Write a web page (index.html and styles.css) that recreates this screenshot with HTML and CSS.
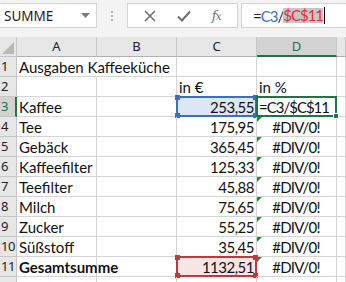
FILE: index.html
```html
<!DOCTYPE html>
<html>
<head>
<meta charset="utf-8">
<link rel="stylesheet" href="styles.css">
</head>
<body>
<div class="app">
  <div class="fbar">
    <div class="namebox">
      <span class="nm">SUMME</span>
      <svg class="dd" width="9" height="5" viewBox="0 0 9 5"><path d="M0 0H9L4.5 5Z" fill="#7a7a7a"/></svg>
    </div>
    <div class="grip"><i></i><i></i><i></i></div>
    <div class="btns">
      <svg class="ico" width="12" height="12" viewBox="0 0 12 12"><path d="M1 1L11 11M11 1L1 11" stroke="#6f6f6f" stroke-width="1.6" fill="none"/></svg>
      <svg class="ico" width="14" height="12" viewBox="0 0 14 12"><path d="M1 6.5L5 10.5L13 1.5" stroke="#6f6f6f" stroke-width="2" fill="none"/></svg>
      <span class="fx">f<small>x</small></span>
    </div>
    <div class="formula"><span>=</span><span class="blue">C3</span><span>/</span><span class="hl"><span class="red">$C$11</span></span><span class="caret"></span></div>
  </div>
  <div class="grid">
    <div class="corner"><svg width="12" height="12" viewBox="0 0 12 12"><path d="M12 0V12H0Z" fill="#b9b9b9"/></svg></div>
    <div class="ch">A</div><div class="ch">B</div><div class="ch">C</div><div class="ch act">D</div><div class="ch"></div>

    <div class="rh">1</div><div class="c ov">Ausgaben Kaffeeküche</div><div class="c"></div><div class="c"></div><div class="c"></div><div class="c"></div>
    <div class="rh">2</div><div class="c"></div><div class="c"></div><div class="c">in €</div><div class="c">in %</div><div class="c"></div>
    <div class="rh act">3</div><div class="c">Kaffee</div><div class="c"></div><div class="c num refb">253,55<span class="box bbox"><i class="h tl"></i><i class="h tr"></i><i class="h bl"></i><i class="h br"></i></span></div><div class="c editing">=C3/$C$11<span class="box gbox"><i class="h gbr"></i></span></div><div class="c"></div>
    <div class="rh">4</div><div class="c">Tee</div><div class="c"></div><div class="c num">175,95</div><div class="c err">#DIV/0!<i class="tri"></i></div><div class="c"></div>
    <div class="rh">5</div><div class="c">Gebäck</div><div class="c"></div><div class="c num">365,45</div><div class="c err">#DIV/0!<i class="tri"></i></div><div class="c"></div>
    <div class="rh">6</div><div class="c">Kaffeefilter</div><div class="c"></div><div class="c num">125,33</div><div class="c err">#DIV/0!<i class="tri"></i></div><div class="c"></div>
    <div class="rh">7</div><div class="c">Teefilter</div><div class="c"></div><div class="c num">45,88</div><div class="c err">#DIV/0!<i class="tri"></i></div><div class="c"></div>
    <div class="rh">8</div><div class="c">Milch</div><div class="c"></div><div class="c num">75,65</div><div class="c err">#DIV/0!<i class="tri"></i></div><div class="c"></div>
    <div class="rh">9</div><div class="c">Zucker</div><div class="c"></div><div class="c num">55,25</div><div class="c err">#DIV/0!<i class="tri"></i></div><div class="c"></div>
    <div class="rh">10</div><div class="c">Süßstoff</div><div class="c"></div><div class="c num">35,45</div><div class="c err">#DIV/0!<i class="tri"></i></div><div class="c"></div>
    <div class="rh">11</div><div class="c bold">Gesamtsumme</div><div class="c"></div><div class="c num refr">1132,51<span class="box rbox"><i class="h tl"></i><i class="h tr"></i><i class="h bl"></i><i class="h br"></i></span></div><div class="c err">#DIV/0!<i class="tri"></i></div><div class="c"></div>
    <div class="rh last"></div><div class="c"></div><div class="c"></div><div class="c"></div><div class="c"></div><div class="c"></div>
  </div>
</div>
</body>
</html>
```

FILE: styles.css
```css
* { box-sizing: border-box; }
html, body { margin: 0; padding: 0; }
body { width: 346px; height: 282px; overflow: hidden; background: #fff; }
.app { width: 346px; height: 282px; overflow: hidden; }

.fbar {
  height: 37px;
  background: #f3f3f3;
  display: flex;
  align-items: flex-start;
  padding-top: 3px;
}
.namebox {
  width: 98px; height: 25px;
  margin-left: -1px;
  background: #fff;
  border: 1px solid #d4d4d4;
  display: flex; align-items: center;
  padding-left: 4px; padding-right: 6px;
  font-family: "Noto Sans", sans-serif; font-size: 13.5px; color: #222;
}
.nm { flex: 1; }
.dd { display: block; }
.grip {
  width: 30px; height: 25px;
  display: flex; flex-direction: column; align-items: center; justify-content: center; gap: 2px;
}
.grip i { width: 2px; height: 2px; background: #b4b4b4; display: block; }
.btns {
  width: 111px; height: 25px;
  background: #fff; border: 1px solid #d4d4d4;
  display: flex; align-items: center; justify-content: space-around;
  padding: 0 6px 0 6px;
}
.ico { display: block; }
.fx {
  font-family: "DejaVu Serif", "Liberation Serif", serif; font-style: italic;
  font-size: 13px; color: #6f6f6f; letter-spacing: -1px;
}
.fx small { font-size: 11px; }
.formula {
  flex: 1; height: 25px; margin-left: 3px;
  background: #fff; border: 1px solid #d4d4d4; border-right: none;
  display: flex; align-items: center;
  padding-left: 11px;
  font-family: "Lato", sans-serif; font-size: 15px; color: #222;
  letter-spacing: -1px;
}
.formula .blue { color: #3b6cc6; }
.formula .red { color: #e03039; }
.formula .hl { background: #c6c6c6; display: inline-block; line-height: 15px; }
.caret { width: 1px; height: 17px; background: #000; display: inline-block; margin-left: 1px; }

.grid {
  display: grid;
  grid-template-columns: 17px 80px 80px 80px 80px 1fr;
  grid-template-rows: repeat(13, 20px);
  font-family: "Lato", sans-serif; font-size: 15px; color: #111;
}
.corner {
  background: #e6e6e6;
  border-right: 1px solid #c6c6c6; border-bottom: 1px solid #c6c6c6;
  display: flex; align-items: flex-end; justify-content: flex-end; padding: 0 2px 2px 0;
}
.corner svg { display: block; }
.ch {
  background: #e6e6e6;
  border-right: 1px solid #c6c6c6; border-bottom: 1px solid #b0b0b0;
  text-align: center; line-height: 19px;
  font-family: "Noto Sans", sans-serif; font-size: 13px; color: #222;
}
.ch.act { background: #d2d2d2; color: #217346; border-bottom: 2px solid #217346; line-height: 18px; }
.rh {
  background: #e6e6e6;
  border-right: 1px solid #c6c6c6; border-bottom: 1px solid #c6c6c6;
  line-height: 19px; padding-left: 1px;
  font-family: "Noto Sans", sans-serif; font-size: 13px; color: #222;
  letter-spacing: -0.5px;
}
.rh.act { background: #d2d2d2; color: #217346; border-right: 2px solid #217346; }
.c {
  position: relative;
  border-right: 1px solid #d4d4d4; border-bottom: 1px solid #d4d4d4;
  line-height: 20px; padding: 0 3px 0 2px;
  white-space: nowrap;
}
.c.ov { overflow: visible; z-index: 1; border-right-color: transparent; }
.num { text-align: right; letter-spacing: -0.5px; padding-right: 2px; }
.err { text-align: center; letter-spacing: -0.8px; }
.editing { letter-spacing: -1px; z-index: 2; }
.bold { font-weight: bold; }
.refb { background: #dce6f4; }
.refr { background: #f9e3e4; }
.box { position: absolute; left: -1px; top: -1px; right: -1px; bottom: -1px; pointer-events: none; }
.bbox { border: 2px solid #3b6cc6; }
.rbox { border: 2px solid #c4363e; }
.gbox { border: 2px solid #217346; }
.h { position: absolute; width: 5px; height: 5px; }
.bbox .h { background: #3b6cc6; }
.rbox .h { background: #c4363e; }
.h.tl { left: -3px; top: -3px; }
.h.tr { right: -3px; top: -3px; }
.h.bl { left: -3px; bottom: -3px; }
.h.br { right: -3px; bottom: -3px; }
.h.gbr { right: -4px; bottom: -4px; background: #217346; border: 1px solid #fff; width: 6px; height: 6px; }
.tri {
  position: absolute; left: 0; top: 0; width: 0; height: 0;
  border-top: 5px solid #1e8a3c; border-right: 5px solid transparent;
}
```
